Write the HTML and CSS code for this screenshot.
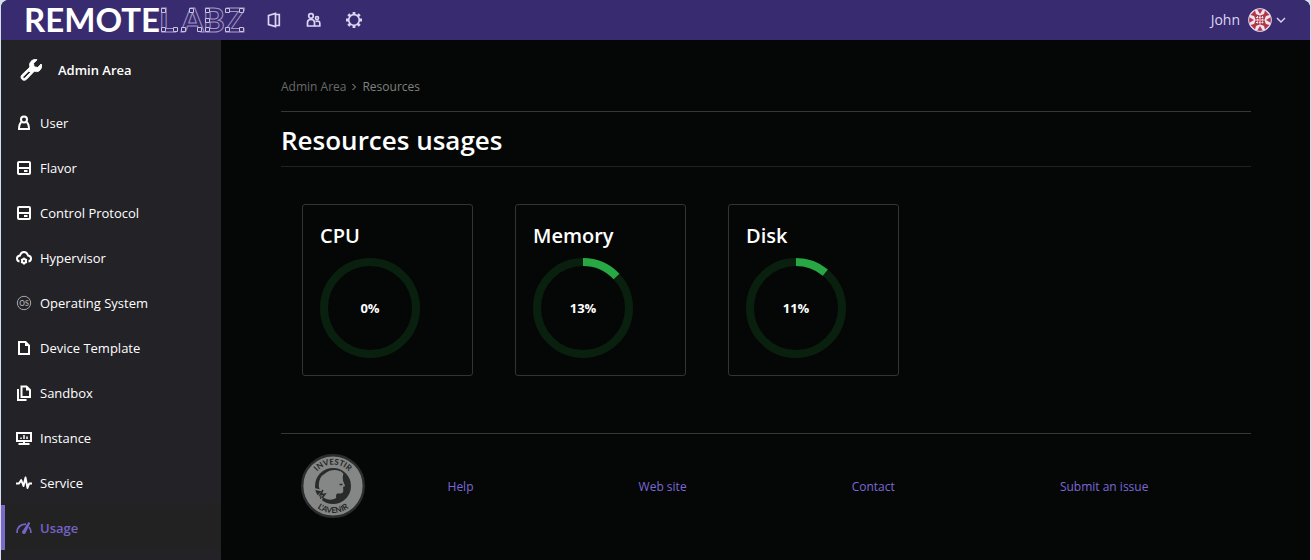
FILE: index.html
```html
<!DOCTYPE html>
<html lang="en">
<head>
<meta charset="utf-8">
<title>Resources usages - RemoteLabz</title>
<link rel="stylesheet" href="styles.css">
</head>
<body>
<div class="app">
  <header class="topbar">
    <a class="brand" href="#" aria-label="RemoteLabz">
      <svg class="logo" viewBox="0 0 224 40" width="224" height="40">
        <text x="0" y="32" class="logo-text logo-solid">REMOTE</text>
        <text x="135 157 179 201" y="32" class="logo-text logo-line">LABZ</text>
        <path class="logo-nodes" d="M137.500 8.500h4v4h-4zM137.500 27.500h4v4h-4zM149.500 27.500h4v4h-4zM165.500 8.500h4v4h-4zM157.500 27.500h4v4h-4zM173.500 27.500h4v4h-4zM181.500 8.500h4v4h-4zM181.500 18.500h4v4h-4zM181.500 27.500h4v4h-4zM201.500 8.500h4v4h-4zM215.500 8.500h4v4h-4zM201.500 27.500h4v4h-4zM215.500 27.500h4v4h-4z"/>
      </svg>
    </a>
    <nav class="topnav" aria-label="Main">
      <a href="#" aria-label="Labs"><svg class="icon" viewBox="0 0 16 16"><path d="M2.500 3.500 9.500 1.500v13L2.500 12.500zM9.500 2.500h3.800v11H9.500"/></svg></a>
      <a href="#" aria-label="Groups"><svg class="icon" viewBox="0 0 16 16"><circle cx="5" cy="4" r="2.300"/><path d="M1.500 14v-3.500Q1.500 7.500 5 7.500t3.500 3V14z"/><circle cx="11" cy="6" r="1.500"/><path d="M9.500 9.300q4.300-1 4.300 2V14H8.500"/></svg></a>
      <a href="#" aria-label="Settings"><svg class="icon" viewBox="0 0 16 16"><circle cx="8" cy="8" r="5.300"/><path d="M8 0v3M8 13v3M0 8h3M13 8h3M2.300 2.300l2 2M11.700 11.700l2 2M2.300 13.700l2-2M11.700 4.300l2-2" stroke-width="2.800"/></svg></a>
    </nav>
    <button class="account" type="button">
      <span>John</span>
      <svg class="avatar" viewBox="0 0 24 24" aria-hidden="true">
        <circle cx="12" cy="12" r="11.500" fill="#eee3ec"/>
        <g fill="#b23648"><path d="M9 1h6l-3 5zM9 23h6l-3-5zM1 9v6l5-3zM23 9v6l-5-3z"/><path d="M2.500 7l4.500-4.500 1 3.500 2 1-3 3-1-2zM21.500 7 17 2.500 16 6l-2 1 3 3 1-2zM2.500 17l4.500 4.500 1-3.500 2-1-3-3-1 2zM21.500 17 17 21.500 16 18l-2-1 3-3 1 2z"/><path d="M7 7h10v10H7z"/></g>
        <path d="M12 7v10M7 12h10M9.500 8v8M14.500 8v8M8 9.500h8M8 14.500h8" stroke="#eee3ec" stroke-width="1" stroke-dasharray="2 .7"/>
        <circle cx="12" cy="12" r="11.400" fill="none" stroke="#cfc6e4"/>
      </svg>
      <svg class="caret" viewBox="0 0 10 10"><path d="M1 3l4 4 4-4"/></svg>
    </button>
  </header>

  <div class="body">
    <nav class="sidebar" aria-label="Admin">
      <a class="side-title" href="#">
        <svg class="wrench" viewBox="0 0 22 22"><path fill="currentColor" stroke="currentColor" stroke-linejoin="round" fill-rule="evenodd" d="M17 .8 13.500 4.300l.5 3.500 3.700.7 3.500-3.500c1 3-.2 5.600-2.200 6.900-1.500.9-3.300.9-4.700.3L6.500 20.300c-1.400 1.300-3.300 1.200-4.600 0-1.200-1.300-1.200-3.200.1-4.500L10 8C9.300 6 9.600 4 11 2.400 12.600.7 15 .1 17 .8zM3.400 17.300c-.6.7-.6 1.200-.1 1.700s1.200.5 1.800-.1l5.300-5.400-1.600-1.600z"/></svg>
        Admin Area
      </a>
      <ul class="side-list">
        <li><a href="#"><svg class="icon" viewBox="0 0 16 16"><circle cx="8" cy="4.500" r="3"/><path d="M5.500 7Q3 9 3 14h10q0-5-2.500-7"/></svg>User</a></li>
        <li><a href="#"><svg class="icon" viewBox="0 0 16 16"><rect x="2" y="2" width="12" height="12" rx="1"/><path d="M2 8h12M8 11h3.500"/></svg>Flavor</a></li>
        <li><a href="#"><svg class="icon" viewBox="0 0 16 16"><rect x="2" y="2" width="12" height="12" rx="1"/><path d="M2 8h12M8 11h3.500"/></svg>Control Protocol</a></li>
        <li><a href="#"><svg class="icon" viewBox="0 0 16 16"><path d="M3.500 11.500Q1 11 1 8.500T4 5.500Q5 2 8 2t4 3.500Q15 6 15 8.500t-2.500 3"/><circle cx="8" cy="11" r="2"/><path d="M8 7.500V9M8 13v1.700M5 9.200l1 .7M11 9.200l-1 .7M5 12.800l1-.7M11 12.800l-1-.7" stroke-width="1.300"/></svg>Hypervisor</a></li>
        <li><a href="#"><svg class="icon thin" viewBox="0 0 16 16"><circle cx="8" cy="8" r="6.700"/><text x="8" y="10.500" text-anchor="middle" class="os-text">OS</text></svg>Operating System</a></li>
        <li><a href="#"><svg class="icon" viewBox="0 0 16 16"><path d="M3 2h6.500L13 5.500V14H3z"/><path d="M9 2v4h4z" fill="currentColor" stroke="none"/></svg>Device Template</a></li>
        <li><a href="#"><svg class="icon" viewBox="0 0 16 16"><path d="M5.500 1.500h5L14 5v7H5.500zM2 4v11h8.500"/><path d="M10 1v4.500h4.500z" fill="currentColor" stroke="none"/></svg>Sandbox</a></li>
        <li><a href="#"><svg class="icon" viewBox="0 0 16 16"><path d="M1 3h14v8H1zM8 11v2.500M2.500 14h11"/><path d="M5 9V7.500M8 9V5M11 9V6.500" stroke-width="1.500"/></svg>Instance</a></li>
        <li><a href="#"><svg class="icon" viewBox="0 0 16 16"><path stroke-width="1.900" stroke-linejoin="round" d="M0 8.500h3L5.200 5l2.300 6L9.500 2.500l2 10.500 1.700-4.500H16"/></svg>Service</a></li>
        <li><a class="active" href="#" aria-current="page"><svg class="icon" viewBox="0 0 16 16"><path stroke-width="1.700" d="M1 13Q1 4.500 10 4.200M13 7q2 2 2 6"/><path fill="currentColor" stroke="none" d="M12.500 2l1.700 1-4.200 9.300a2 2 0 1 1-3-2z"/></svg>Usage</a></li>
      </ul>
    </nav>

    <div class="content">
      <main>
        <nav class="breadcrumb" aria-label="Breadcrumb">
          <a href="#">Admin Area</a>
          <svg viewBox="0 0 6 8" class="crumb-sep"><path d="M1.500 1l3 3-3 3"/></svg>
          <span class="current">Resources</span>
        </nav>
        <h1>Resources usages</h1>
        <div class="cards">
          <section class="card">
            <h2>CPU</h2>
            <div class="gauge">
              <svg viewBox="0 0 100 100"><circle class="track" cx="50" cy="50" r="46"/></svg>
              <span>0%</span>
            </div>
          </section>
          <section class="card">
            <h2>Memory</h2>
            <div class="gauge">
              <svg viewBox="0 0 100 100"><circle class="track" cx="50" cy="50" r="46"/><circle class="value" cx="50" cy="50" r="46" pathLength="100" stroke-dasharray="13 100"/></svg>
              <span>13%</span>
            </div>
          </section>
          <section class="card">
            <h2>Disk</h2>
            <div class="gauge">
              <svg viewBox="0 0 100 100"><circle class="track" cx="50" cy="50" r="46"/><circle class="value" cx="50" cy="50" r="46" pathLength="100" stroke-dasharray="11 100"/></svg>
              <span>11%</span>
            </div>
          </section>
        </div>
      </main>
      <footer class="footer">
        <svg class="seal" viewBox="0 0 64 64" role="img" aria-label="Investir l'avenir">
          <defs><path id="arc-top" d="M10.500 32a21.500 21.500 0 0 1 43 0"/><path id="arc-bottom" d="M5 32a27 27 0 0 0 54 0"/></defs>
          <circle cx="32" cy="32" r="30.800" fill="#858786" stroke="#2b2e2d" stroke-width="2.400"/>
          <circle cx="32" cy="32" r="18" fill="#282b2a"/>
          <path fill="#858786" d="M24 19.500q5-4 12-3.300 4 .6 6.300 3.300l-.6 4 .4 3.500 2 5-2 1 .2 3.500q0 3-3 3h-3q-2 1.500-1 4.500-5 3-10 1l-4-2q1.500-3-.5-5-3-2-3-7 0-8 6.200-11.500z"/>
          <path d="M14 35l8 2-5 5 5-1-2 6M15 41l4 3" fill="none" stroke="#858786" stroke-width="1.500"/>
          <path d="M22 36l-3 5 5-1-3 4" fill="none" stroke="#282b2a" stroke-width="1.500"/>
          <path d="M38.500 30.500h3" stroke="#282b2a" stroke-width="1.500"/>
          <text class="seal-text" text-anchor="middle"><textPath href="#arc-top" startOffset="50%">INVESTIR</textPath></text>
          <text class="seal-text" text-anchor="middle"><textPath href="#arc-bottom" startOffset="50%">L’AVENIR</textPath></text>
        </svg>
        <nav class="footer-links" aria-label="Footer">
          <a href="#">Help</a>
          <a href="#">Web site</a>
          <a href="#">Contact</a>
          <a href="#">Submit an issue</a>
        </nav>
      </footer>
    </div>
  </div>
</div>
</body>
</html>
```
FILE: styles.css
```css
* { box-sizing: border-box; }

body {
  margin: 0;
  background: #d3deea;
  color: #fff;
  font: 13px/20px "Open Sans", "Noto Sans", sans-serif;
}

a { color: inherit; text-decoration: none; }

.app {
  display: flex;
  flex-direction: column;
  min-height: 100vh;
  margin: 0 1px;
  border-radius: 8px 8px 0 0;
  background: #050706;
}

.topbar {
  display: flex;
  align-items: center;
  height: 40px;
  padding: 0 24px 0 23px;
  border-radius: 8px 8px 0 0;
  background: #382b70;
  color: #dcd6f5;
}

.brand, .topnav, .topnav a { display: flex; }

.logo { overflow: visible; }
.logo-text {
  font-family: Lato, sans-serif;
  font-size: 33px;
  font-weight: 700;
}
.logo-solid { fill: #fff; }
.logo-line { fill: #382b70; stroke: #a196c6; stroke-width: 1; }
.logo-nodes { fill: #382b70; stroke: #c9c2df; stroke-width: 1; }

.topnav { gap: 24px; margin-left: 18px; }

.icon {
  width: 16px;
  height: 16px;
  flex: none;
  fill: none;
  stroke: currentColor;
  stroke-width: 2;
}
.topnav .icon { stroke-width: 1.7; }
.icon.thin { stroke-width: 1; color: #a9a9ac; }
.os-text { font: 700 7px Lato, sans-serif; fill: currentColor; stroke: none; }

.account {
  display: flex;
  align-items: center;
  gap: 8px;
  margin-left: auto;
  padding: 0;
  border: 0;
  background: none;
  color: inherit;
  font: inherit;
  font-size: 14px;
}
.avatar { width: 24px; height: 24px; }
.caret { width: 10px; height: 10px; margin-left: -4px; fill: none; stroke: currentColor; stroke-width: 1.4; }

.body { display: flex; flex: 1; }

.sidebar { flex: none; width: 220px; background: #232227; }

.side-title {
  display: flex;
  align-items: center;
  gap: 16px;
  height: 60px;
  padding-left: 19px;
  font-weight: 600;
}
.wrench { width: 22px; height: 22px; }

.side-list { margin: 0; padding: 0; list-style: none; }
.side-list a {
  display: flex;
  align-items: center;
  gap: 8px;
  height: 45px;
  padding-left: 11px;
  border-left: 4px solid transparent;
}
.side-list .active {
  border-color: #7b68c8;
  background: #222223;
  color: #7563c6;
  font-weight: 600;
}

.content { flex: 1; min-width: 0; padding: 36px 59px 40px 60px; }

.breadcrumb {
  display: flex;
  align-items: center;
  gap: 5px;
  height: 36px;
  padding-bottom: 14px;
  border-bottom: 1px solid #343736;
  color: #686a69;
  font-size: 12px;
}
.breadcrumb .current { color: #7f8180; font-weight: 500; }
.crumb-sep { width: 6px; height: 8px; fill: none; stroke: #999; }

h1 {
  margin: 0;
  padding: 12px 0 10px;
  border-bottom: 1px solid #1c2324;
  font-size: 26px;
  font-weight: 600;
  line-height: 32px;
}

.cards {
  display: grid;
  grid-template-columns: repeat(auto-fill, 171px);
  gap: 42px;
  padding: 37px 21px 57px;
}
.card {
  padding: 17px;
  border: 1px solid #313337;
  border-radius: 3px;
}
h2 { margin: 0; font-size: 20px; font-weight: 600; line-height: 28px; }

.gauge { display: grid; place-items: center; width: 100px; height: 100px; margin-top: 8px; }
.gauge svg { grid-area: 1 / 1; width: 100px; height: 100px; transform: rotate(-90deg); }
.gauge span { grid-area: 1 / 1; font-weight: 700; }
.gauge circle { fill: none; stroke-width: 8; }
.track { stroke: #09200f; }
.value { stroke: #28a745; }

.footer {
  display: flex;
  align-items: center;
  padding: 20px;
  border-top: 1px solid #343736;
}
.seal { flex: none; width: 64px; height: 64px; }
.seal-text { font: 700 8px Lato, sans-serif; fill: #232625; }

.footer-links {
  display: flex;
  flex: 1;
  justify-content: space-around;
  padding-top: 2px;
  color: #7b68d8;
  font-size: 12px;
}
```
